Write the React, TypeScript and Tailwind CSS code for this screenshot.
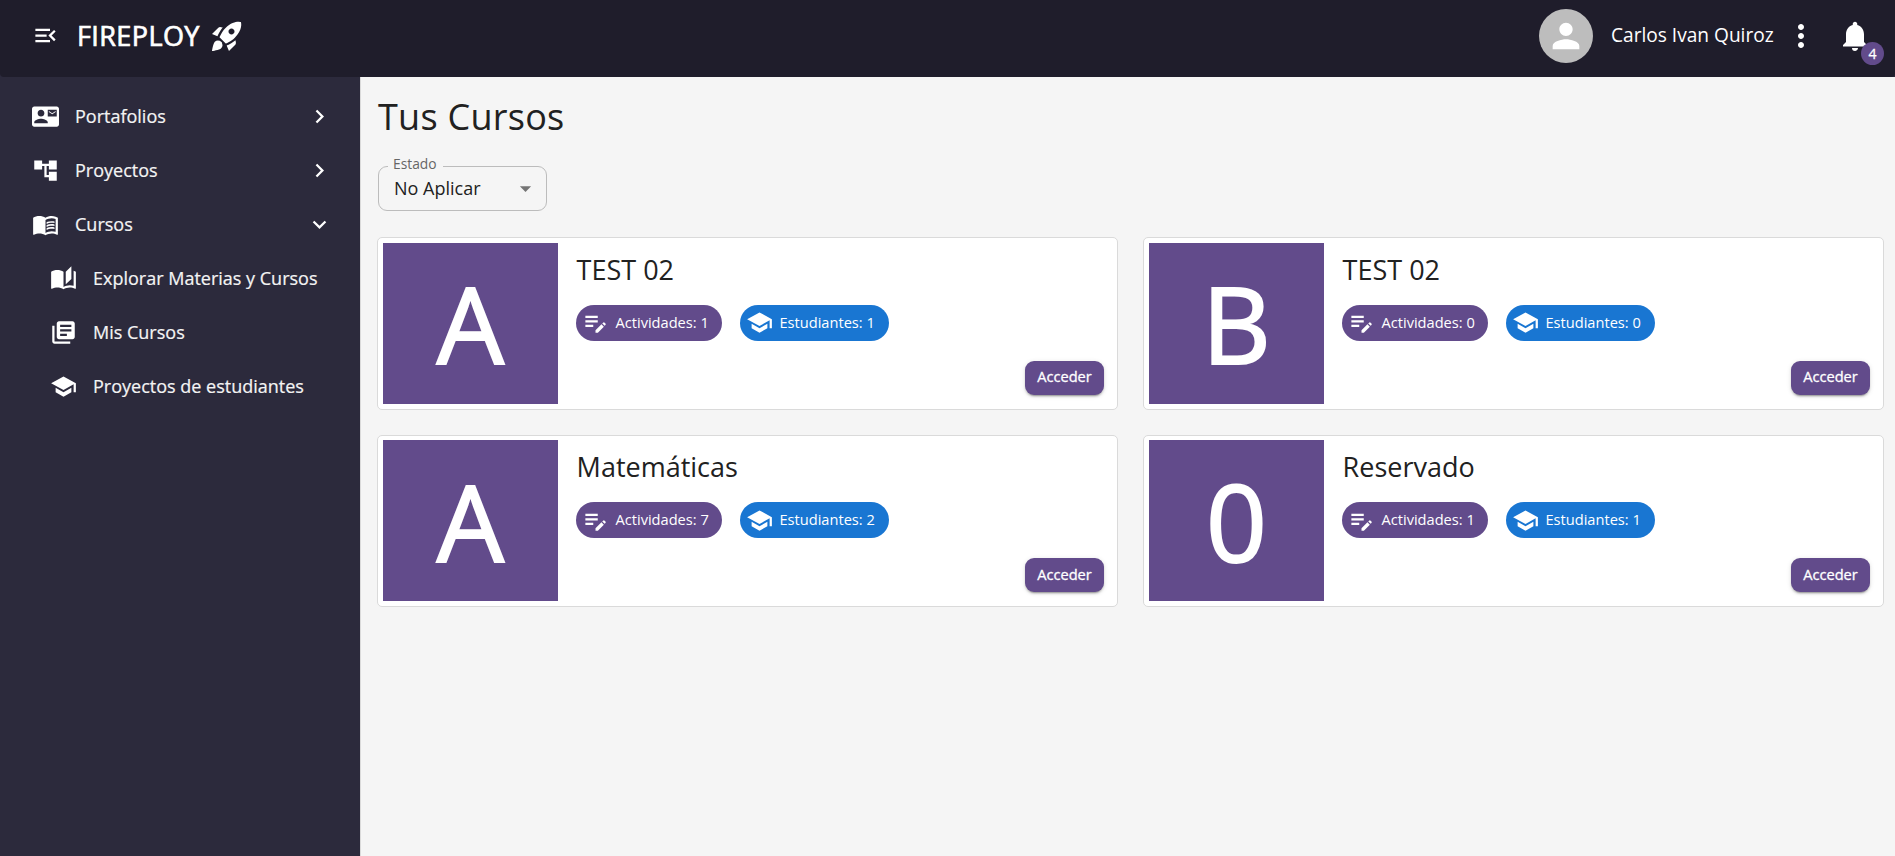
import type { ReactNode } from "react";
import {
  MdAccountTree,
  MdArrowDropDown,
  MdAutoStories,
  MdChevronRight,
  MdContactMail,
  MdEditNote,
  MdExpandMore,
  MdLibraryBooks,
  MdMenuBook,
  MdMenuOpen,
  MdMoreVert,
  MdNotifications,
  MdPerson,
  MdRocketLaunch,
  MdSchool,
} from "react-icons/md";

interface Course {
  letter: string;
  title: string;
  activities: number;
  students: number;
}

const courses: Course[] = [
  { letter: "A", title: "TEST 02", activities: 1, students: 1 },
  { letter: "B", title: "TEST 02", activities: 0, students: 0 },
  { letter: "A", title: "Matemáticas", activities: 7, students: 2 },
  { letter: "0", title: "Reservado", activities: 1, students: 1 },
];

function Header() {
  return (
    <header className="flex h-[77px] shrink-0 items-center rounded-b-[4px] bg-[#1f1d2b] text-white">
      <button className="-mt-[6px] ml-8 flex h-[27px] w-[27px] items-center justify-center">
        <MdMenuOpen size={27} />
      </button>
      <span className="-mt-[6px] ml-[18px] w-[132px] text-[27px] leading-9 font-medium tracking-[0.4px] [-webkit-text-stroke:0.7px_white]">
        FIREPLOY
      </span>
      <MdRocketLaunch size={36} className="-mt-[5px]" />
      <div className="ml-auto flex items-center">
        <div className="-mt-[5px] flex h-[54px] w-[54px] items-center justify-center rounded-full bg-[#bdbdbd]">
          <MdPerson size={40} />
        </div>
        <span className="-mt-[6px] ml-[18px] w-[163px] text-[19.125px] leading-[27px] whitespace-nowrap">Carlos Ivan Quiroz</span>
        <MdMoreVert size={36} className="-mt-[5px] ml-[9px]" />
        <div className="relative -mt-[5px] mr-[22px] ml-[18px]">
          <MdNotifications size={36} />
          <span className="absolute top-[24px] left-[24px] flex h-[23px] w-[23px] items-center justify-center rounded-full bg-[#624b8b] text-[14px] leading-none font-medium [-webkit-text-stroke:0.3px_white]">
            4
          </span>
        </div>
      </div>
    </header>
  );
}

function NavItem({ icon, label, trailing, nested }: { icon: ReactNode; label: string; trailing?: ReactNode; nested?: boolean }) {
  return (
    <li className={nested ? "flex h-[54px] items-center pl-[50px]" : "flex h-[54px] items-center pl-8"}>
      {icon}
      <span className="ml-[16px] text-[18px] leading-[27px] whitespace-nowrap text-[#f4f4f4] [-webkit-text-stroke:0.2px_#f4f4f4]">{label}</span>
      {trailing && <span className="mr-[27px] ml-auto">{trailing}</span>}
    </li>
  );
}

function Sidebar() {
  return (
    <nav className="w-[360px] shrink-0 bg-[#2c2a3c] pt-[12px] text-white">
      <ul>
        <NavItem icon={<MdContactMail size={27} />} label="Portafolios" trailing={<MdChevronRight size={27} />} />
        <NavItem icon={<MdAccountTree size={27} />} label="Proyectos" trailing={<MdChevronRight size={27} />} />
        <NavItem icon={<MdMenuBook size={27} />} label="Cursos" trailing={<MdExpandMore size={27} />} />
        <NavItem nested icon={<MdAutoStories size={27} />} label="Explorar Materias y Cursos" />
        <NavItem nested icon={<MdLibraryBooks size={27} />} label="Mis Cursos" />
        <NavItem nested icon={<MdSchool size={27} />} label="Proyectos de estudiantes" />
      </ul>
    </nav>
  );
}

function CourseCard({ course }: { course: Course }) {
  return (
    <article className="flex h-[172.7px] rounded-[5px] border border-[#dadada] bg-white pt-[4.5px] pr-[13px] pb-[5px] pl-[5px]">
      <div className="flex h-[161.2px] w-[175px] shrink-0 items-center justify-center bg-[#624b8b] text-[106.5px] leading-none font-medium text-white [-webkit-text-stroke:2px_white]">
        {course.letter}
      </div>
      <div className="ml-[18px] flex grow flex-col pt-[9px]">
        <h2 className="pl-[0.6px] text-[27px] leading-9 text-[#212121]">{course.title}</h2>
        <div className="mt-[17px] flex gap-[18px] text-[14.625px] text-white">
          <span className="flex h-9 w-[146px] items-center rounded-full bg-[#624b8b] pl-[6px] whitespace-nowrap">
            <MdEditNote size={27} />
            <span className="ml-[6.5px]">Actividades: {course.activities}</span>
          </span>
          <span className="flex h-9 w-[149px] items-center rounded-full bg-[#1976d2] pl-[6px] whitespace-nowrap">
            <MdSchool size={27} />
            <span className="ml-[6.5px]">Estudiantes: {course.students}</span>
          </span>
        </div>
        <button className="mt-[20px] flex h-[34px] w-[79px] shrink-0 items-center justify-center self-end rounded-[9px] bg-[#624b8b] pb-px text-[14.625px] font-medium text-white shadow-[0_3px_1px_-2px_rgba(0,0,0,0.2),0_2px_2px_0_rgba(0,0,0,0.14),0_1px_5px_0_rgba(0,0,0,0.12)] [-webkit-text-stroke:0.3px_white]">
          Acceder
        </button>
      </div>
    </article>
  );
}

export default function App() {
  return (
    <div className="flex h-[856px] w-[1895px] flex-col overflow-hidden bg-[#2c2a3c] font-['Open_Sans','Noto_Sans',sans-serif]">
      <Header />
      <div className="flex grow">
        <Sidebar />
        <main className="grow border-l border-[#dadada] bg-[#f5f5f5] pr-[11px] pl-[16px]">
          <h1 className="mt-[16px] ml-[1px] text-[36px] leading-[47px] tracking-[0.00735em] text-[#212121]">Tus Cursos</h1>
          <fieldset className="mt-[15px] ml-[1px] flex h-[56px] w-[169px] rounded-[9px] border border-[#bcbcbc] pr-[7px] pl-[9px]">
            <legend className="pr-[6px] pb-[5px] pl-[5px] text-[13.8px] leading-[18px] text-[#666]">Estado</legend>
            <div className="-mt-[12px] flex grow items-center pl-[6px] text-[18px] leading-[27px] text-[#212121]">
              No Aplicar
              <MdArrowDropDown size={27} className="ml-auto text-[#757575]" />
            </div>
          </fieldset>
          <section className="mt-[26.3px] grid grid-cols-2 gap-x-[25px] gap-y-[24.8px]">
            {courses.map((course, index) => (
              <CourseCard key={index} course={course} />
            ))}
          </section>
        </main>
      </div>
    </div>
  );
}
